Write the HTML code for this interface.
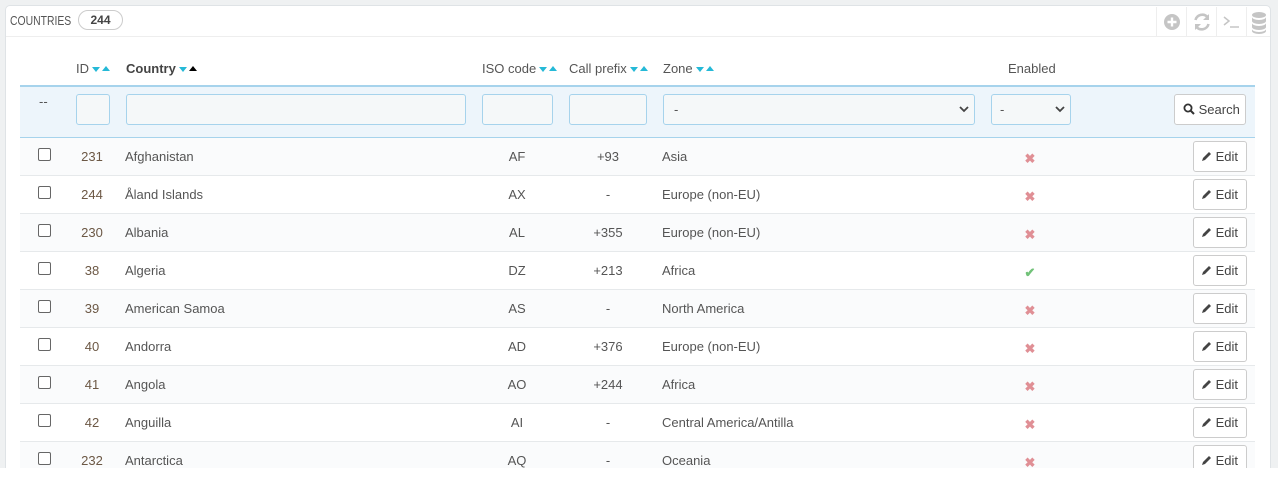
<!DOCTYPE html>
<html><head><meta charset="utf-8"><style>
*{box-sizing:border-box;margin:0;padding:0}
html,body{width:1278px;height:479px;overflow:hidden}
body{background:#eff1f2;font-family:"Liberation Sans",sans-serif;font-size:13px;color:#555;position:relative}
.panel{position:absolute;left:5px;top:5px;width:1266px;height:480px;background:#fff;border:1px solid #dfe3e6;border-radius:5px}
.hdr{position:absolute;left:0;top:0;width:1264px;height:31px;border-bottom:1px solid #eee}
.t{position:absolute;left:4px;top:7px;font-size:13px;color:#555;transform:scaleX(.8);transform-origin:0 0}
.badge{position:absolute;left:72px;top:4px;width:45px;height:20px;border:1px solid #ccc;border-radius:10px;text-align:center;font-weight:bold;font-size:12px;line-height:18px;color:#444}
.tb{position:absolute;top:1px;width:30px;height:30px;border-left:1px solid #eee}
.a{position:absolute;white-space:nowrap}
.hd{top:61px;font-size:13px;color:#555}
.dn{display:inline-block;width:0;height:0;border-left:4px solid transparent;border-right:4px solid transparent;border-top:5px solid #25b9d7;margin-left:3px;vertical-align:1px}
.up{display:inline-block;width:0;height:0;border-left:4px solid transparent;border-right:4px solid transparent;border-bottom:5px solid #25b9d7;margin-left:2px;vertical-align:2px}
.filt{position:absolute;left:20px;top:85px;width:1235px;height:53px;background:#edf5fb;border-top:2px solid #a6d3ec;border-bottom:1px solid #a6d3ec}
.in{position:absolute;top:94px;height:31px;border:1px solid #a6d3ec;border-radius:3px;background:#f5f8f9}
.row{position:absolute;left:20px;width:1235px;height:38px;border-bottom:1px solid #e6e9eb}
.cb{position:absolute;left:38px;width:13px;height:13px;border:1px solid #666;border-radius:2px;background:#fff}
.x{color:#e08f95;font-weight:bold;font-size:13px}
.ok{color:#72c279;font-weight:bold;font-size:13px}
.btn{position:absolute;left:1193px;width:54px;height:31px;border:1px solid #ccc;border-radius:3px;background:#fff;font-size:13px;line-height:29px;padding-left:7px;color:#444}
</style></head><body>
<div class="panel">
<div class="hdr"><div class="t">COUNTRIES</div><div class="badge">244</div>
<div class="tb" style="left:1150px"><svg width="30" height="30"><circle cx="15" cy="15" r="8" fill="#c5c5c5"/><path d="M15 10.5v9M10.5 15h9" stroke="#fff" stroke-width="2.4"/></svg></div>
<div class="tb" style="left:1180px"><svg width="30" height="30"><path d="M8.5 13a7 7 0 0 1 12-3M21.5 17a7 7 0 0 1-12 3" fill="none" stroke="#c5c5c5" stroke-width="2.6"/><path d="M22 7v6h-6zM8 23v-6h6z" fill="#c5c5c5"/></svg></div>
<div class="tb" style="left:1210px"><svg width="30" height="30"><path d="M7 10l5 4-5 4" fill="none" stroke="#c5c5c5" stroke-width="1.5"/><path d="M13 20h9" stroke="#c5c5c5" stroke-width="1.5"/></svg></div>
<div class="tb" style="left:1240px"><svg width="26" height="30"><ellipse cx="12" cy="8" rx="7" ry="3" fill="#c5c5c5"/><path d="M5 10v4a7 3 0 0 0 14 0v-4a7 3 0 0 1-14 0zM5 16v4a7 3 0 0 0 14 0v-4a7 3 0 0 1-14 0zM5 22v2a7 3 0 0 0 14 0v-2a7 3 0 0 1-14 0z" fill="#c5c5c5"/></svg></div>
</div>
</div>
<div class="a hd" style="left:76px">ID<span class="dn"></span><span class="up"></span></div>
<div class="a hd" style="left:126px;font-weight:bold;color:#444">Country<span class="dn"></span><span class="up" style="border-bottom-color:#000"></span></div>
<div class="a hd" style="left:482px">ISO code<span class="dn"></span><span class="up"></span></div>
<div class="a hd" style="left:569px">Call prefix<span class="dn"></span><span class="up"></span></div>
<div class="a hd" style="left:663px">Zone<span class="dn"></span><span class="up"></span></div>
<div class="a hd" style="left:1008px">Enabled</div>
<div class="filt"></div>
<div class="a" style="left:39px;top:94px">--</div>
<div class="in" style="left:76px;width:34px"></div>
<div class="in" style="left:126px;width:340px"></div>
<div class="in" style="left:482px;width:71px"></div>
<div class="in" style="left:569px;width:78px"></div>
<div class="in" style="left:663px;width:312px;padding:7px 10px">-<svg style="position:absolute;right:5px;top:10px" width="10" height="8"><path d="M1 2l4 4 4-4" fill="none" stroke="#444" stroke-width="1.8"/></svg></div>
<div class="in" style="left:991px;width:80px;padding:7px 8px">-<svg style="position:absolute;right:5px;top:10px" width="10" height="8"><path d="M1 2l4 4 4-4" fill="none" stroke="#444" stroke-width="1.8"/></svg></div>
<div class="btn" style="left:1174px;top:94px;width:72px;padding-left:8px"><svg width="12" height="12" style="vertical-align:-1px"><circle cx="5" cy="5" r="3.6" fill="none" stroke="#333" stroke-width="1.8"/><path d="M7.5 7.5l3.5 3.5" stroke="#333" stroke-width="2"/></svg> Search</div>
<div id="rows"></div>
<script>
var d=[["231","Afghanistan","AF","+93","Asia",0],["244","Åland Islands","AX","-","Europe (non-EU)",0],["230","Albania","AL","+355","Europe (non-EU)",0],["38","Algeria","DZ","+213","Africa",1],["39","American Samoa","AS","-","North America",0],["40","Andorra","AD","+376","Europe (non-EU)",0],["41","Angola","AO","+244","Africa",0],["42","Anguilla","AI","-","Central America/Antilla",0],["232","Antarctica","AQ","-","Oceania",0]];
var h="";d.forEach(function(r,i){var y=138+i*38;var ty=y+11;
h+='<div class="row" style="top:'+y+'px;background:'+(i%2?'#fff':'#fafbfc')+'"></div>';
h+='<div class="cb" style="top:'+(y+10)+'px"></div>';
h+='<div class="a" style="left:72px;width:40px;text-align:center;top:'+ty+'px;color:#6c5845">'+r[0]+'</div>';
h+='<div class="a" style="left:125px;top:'+ty+'px">'+r[1]+'</div>';
h+='<div class="a" style="left:497px;width:40px;text-align:center;top:'+ty+'px">'+r[2]+'</div>';
h+='<div class="a" style="left:583px;width:50px;text-align:center;top:'+ty+'px">'+r[3]+'</div>';
h+='<div class="a" style="left:662px;top:'+ty+'px">'+r[4]+'</div>';
h+='<div class="a '+(r[5]?'ok':'x')+'" style="left:1020px;width:20px;text-align:center;top:'+(ty+2)+'px">'+(r[5]?'✔':'✖')+'</div>';
h+='<div class="btn" style="top:'+(y+3)+'px"><svg width="11" height="11" style="vertical-align:-1px"><path d="M1 10l1-3 6-6 2 2-6 6z" fill="#444"/></svg> Edit</div>';});
document.getElementById("rows").innerHTML=h;
</script>
<div style="position:absolute;left:0;top:468px;width:1278px;height:11px;background:#fff"></div>
</body></html>
